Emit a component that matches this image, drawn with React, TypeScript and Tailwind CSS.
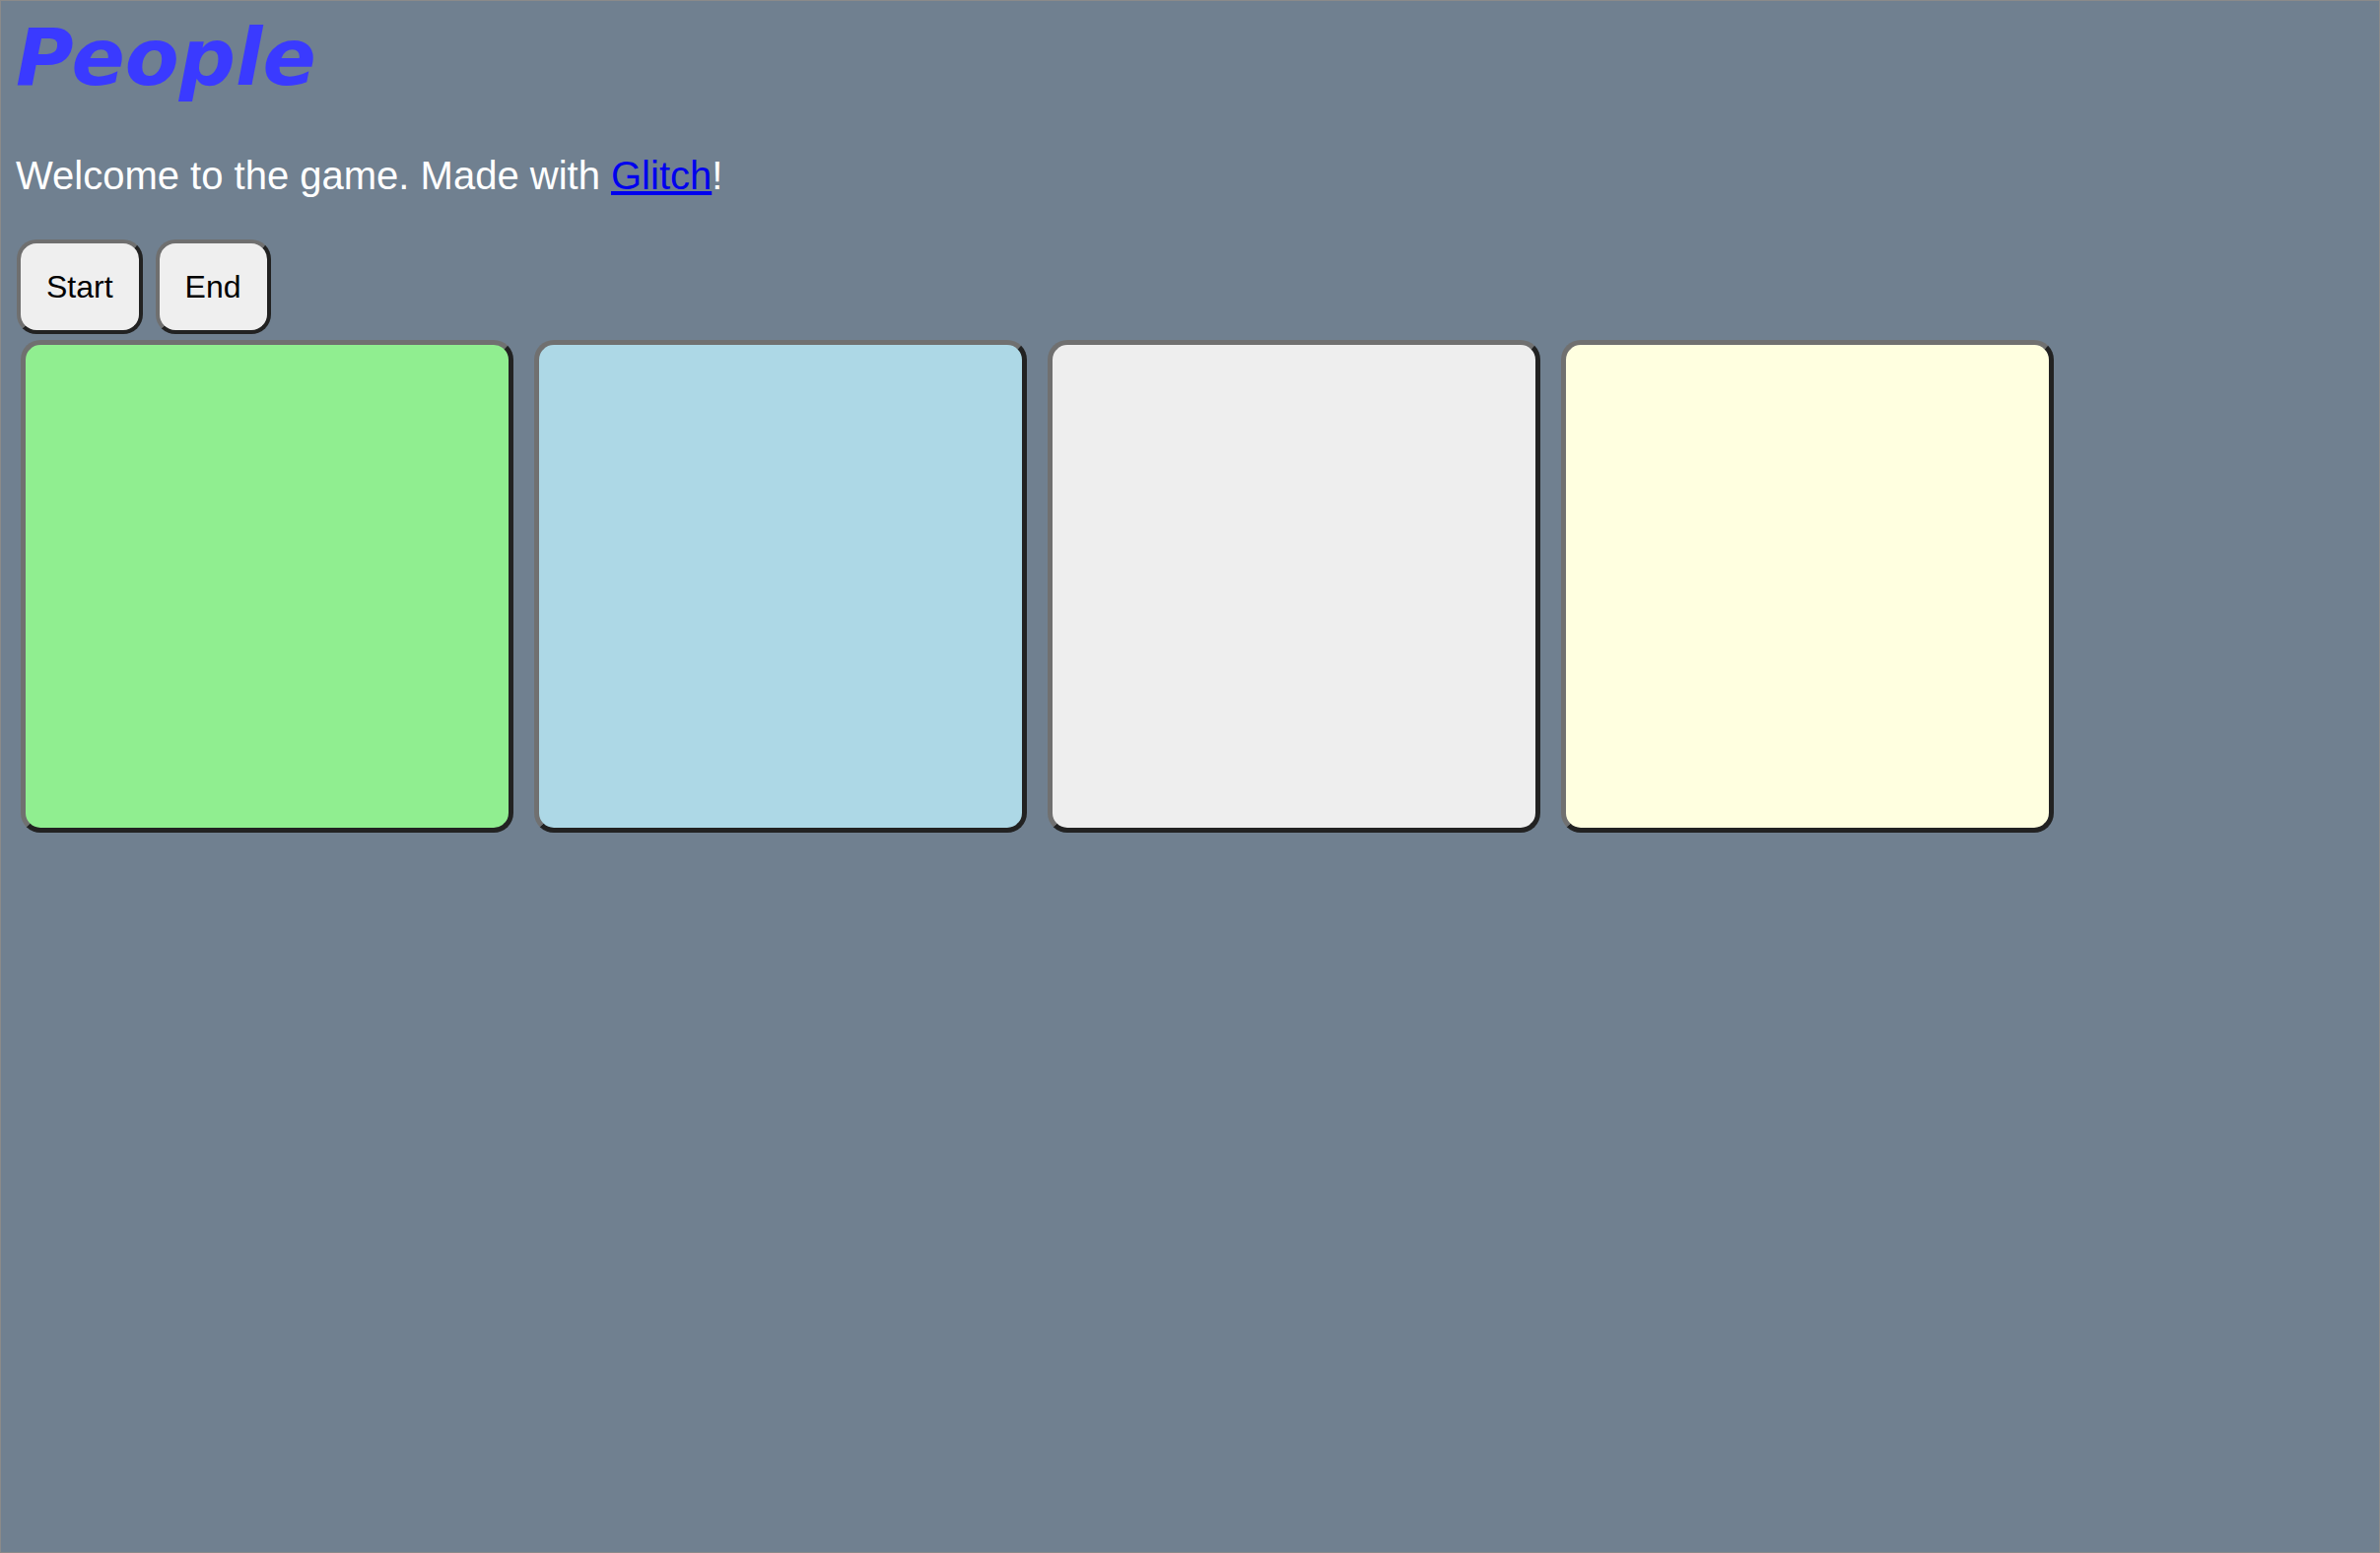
const cards = ['bg-[#90ee90]', 'bg-[#add8e6]', 'bg-[#eeeeee]', 'bg-[#ffffe0]'];

function GameButton({ label }: { label: string }) {
  return (
    <button className="rounded-[20px] border-[4px] border-t-[#6f6f6f] border-l-[#6f6f6f] border-r-[#222222] border-b-[#222222] bg-[#efefef] px-[26px] py-[25px] text-[32px] leading-[38px] text-black">
      {label}
    </button>
  );
}

export default function App() {
  return (
    <div className="box-border h-[1576px] w-full overflow-hidden border border-[#8a8a8a] bg-[#708090] pl-[15px] pt-[11px] font-['Liberation_Sans',Arial,sans-serif]">
      <h1 className="font-['DejaVu_Sans',Verdana,sans-serif] text-[80px] font-bold italic leading-[93px] text-[#3a3aff]">
        People
      </h1>

      <p className="mt-[50px] text-[40px] leading-[46px] text-white">
        Welcome to the game. Made with{' '}
        <a href="#" className="text-[#0000ee] underline">
          Glitch
        </a>
        !
      </p>

      <div className="ml-[1px] mt-[42px] flex gap-[13px]">
        <GameButton label="Start" />
        <GameButton label="End" />
      </div>

      <div className="ml-[5px] mt-[6px] flex gap-[21px]">
        {cards.map((bg) => (
          <div
            key={bg}
            className={`h-[500px] w-[500px] rounded-[20px] border-[5px] border-t-[#707070] border-l-[#707070] border-r-[#222222] border-b-[#222222] ${bg}`}
          />
        ))}
      </div>
    </div>
  );
}
